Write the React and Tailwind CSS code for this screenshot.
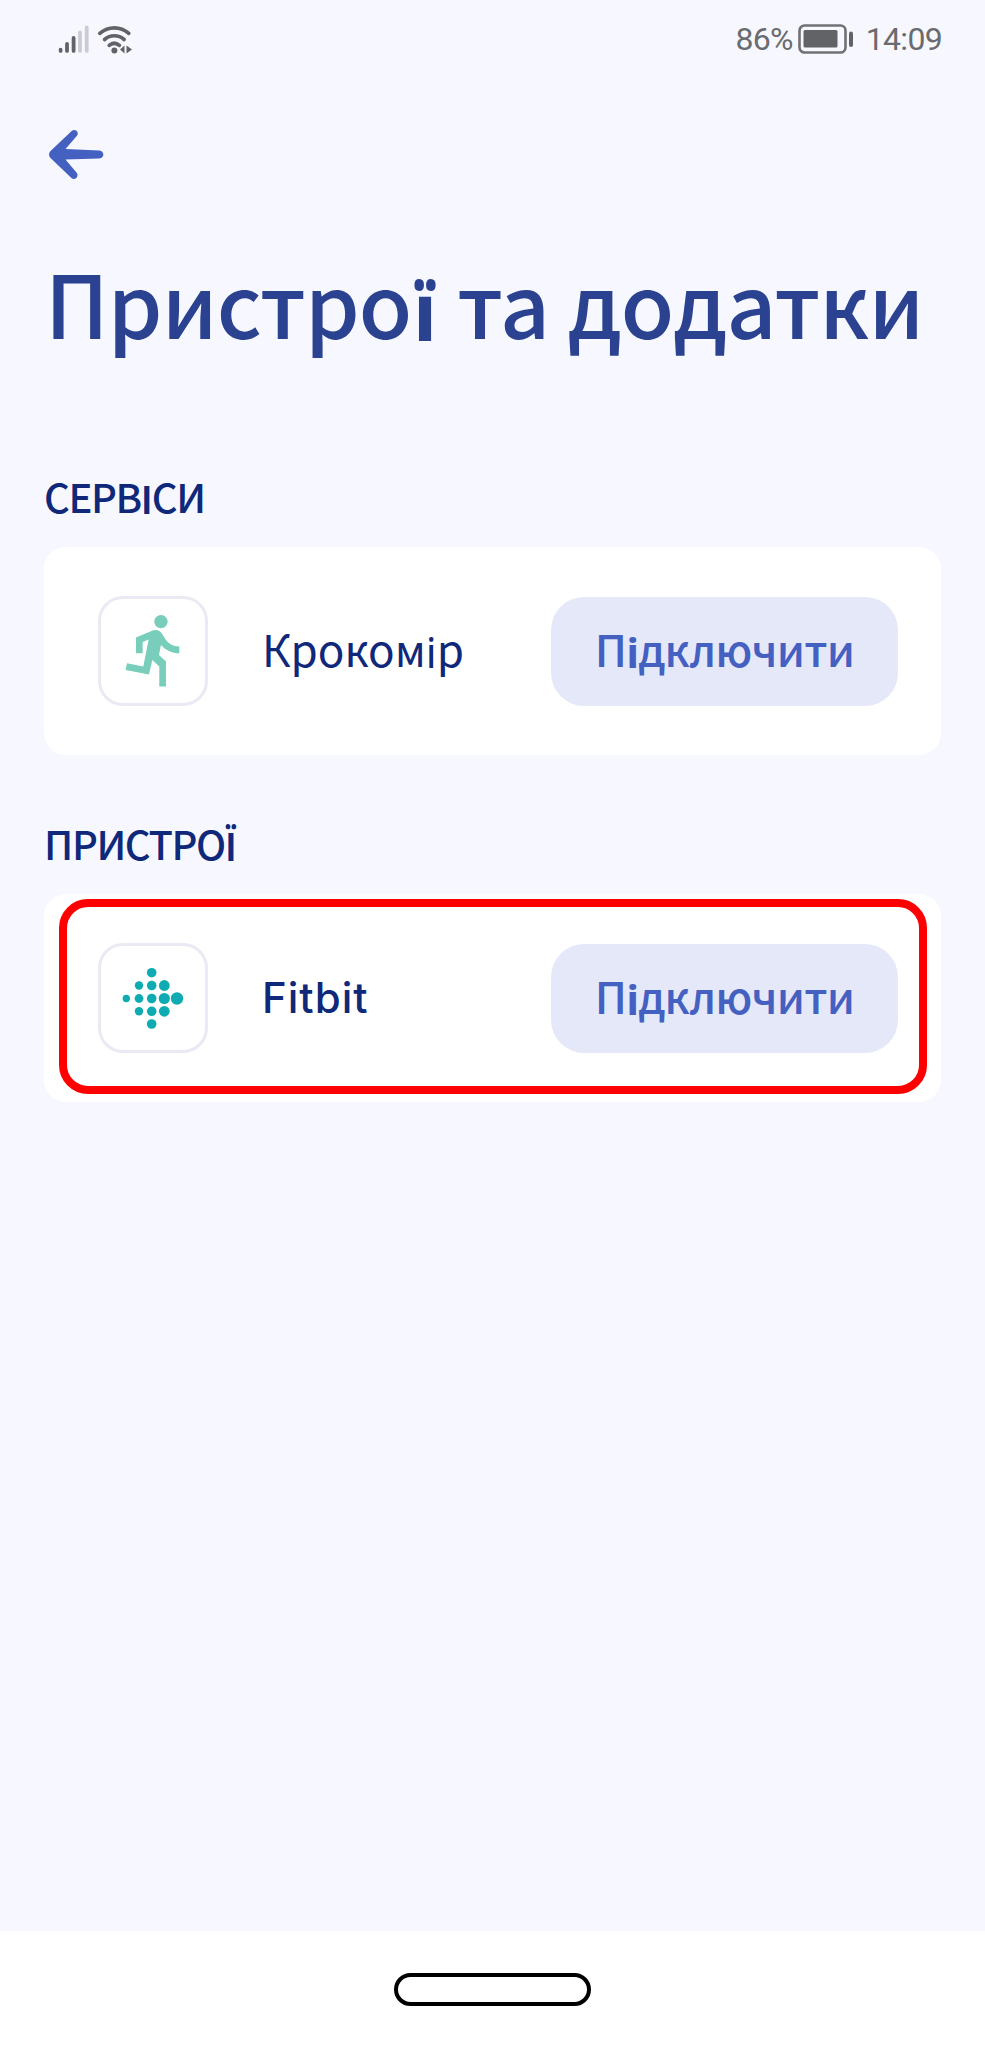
import React from 'react';

const fitbitDots = [
    [14.3, 41.5, 3.7],
    [27, 28.5, 4.2], [27, 41.5, 4.4], [27, 54.3, 4.2],
    [39.7, 15.7, 4.8], [39.7, 28.5, 4.8], [39.7, 41.5, 4.8], [39.7, 54.3, 4.8], [39.7, 67, 4.8],
    [52.3, 28.5, 5.4], [52.3, 41.5, 5.6], [52.3, 54.3, 5.4],
    [65, 41.5, 6.2],
];

const SignalIcon = () => (
    <svg className="w-8 h-7" viewBox="0 0 32 28" fill="none" strokeWidth="3.8" strokeLinecap="round">
        <path d="M2.6 24.7v1.2M9 19v6.9M15.6 13v12.9" stroke="#626366" />
        <path d="M22 7.5v18.4M28.7 2.5v23.4" stroke="#cbccd2" />
    </svg>
);

const WifiIcon = () => (
    <svg className="w-[36px] h-[30px]" viewBox="0 0 36 30" fill="none">
        <g stroke="#626366" strokeWidth="3.7" strokeLinecap="round">
            <path d="M2.8 9.4c8.5-7.4 20.5-7.4 29 0" />
            <path d="M7.6 15.5c5.7-5 13.8-5 19.5 0" />
            <path d="M12.2 21.4c3.2-2.7 7-2.7 10.2 0" />
        </g>
        <circle cx="17.4" cy="26.5" r="3" fill="#626366" />
        <path d="M23 25.5l4.5-4v8zM29.5 21.5v8l5.5-4z" fill="#626366" />
    </svg>
);

const BatteryIcon = () => (
    <svg className="w-[56px] h-[30px]" viewBox="0 0 56 30">
        <rect x="1.5" y="1.5" width="46" height="27" rx="5" fill="none" stroke="#707174" strokeWidth="2.6" />
        <rect x="5.5" y="6" width="34" height="17.5" rx="1.5" fill="#626366" />
        <rect x="51" y="7.5" width="4" height="15.5" rx="2" fill="#626366" />
    </svg>
);

const BackIcon = () => (
    <svg className="w-[57px] h-[50px]" viewBox="0 0 56 50" preserveAspectRatio="none" fill="#4460c0">
        <path d="M1 24.5Q1 22.5 2.5 21L23.2 0.9C25.5 -0.9 28.8 0.2 29.2 3C29.4 4.3 28.8 5.4 28 6.2L17.2 18.9L50.5 20.5C55.7 21 55.7 28.1 50.5 28.4L17.2 29.6L28 42.6C30 45 28.8 48.5 25.8 48.9C24.7 49.1 23.7 48.6 23 48L2.5 28Q1 26.5 1 24.5Z" />
    </svg>
);

const RunIcon = () => (
    <svg className="w-20 h-20 ml-[5px] -mt-[2px] shrink-0" viewBox="0 0 24 24" fill="#78ceba">
        <path d="M13.49 5.48c1.1 0 2-.9 2-2s-.9-2-2-2-2 .9-2 2 .9 2 2 2zm-3.6 13.9l1-4.4 2.1 2v6h2v-7.5l-2.1-2 .6-3c1.3 1.5 3.3 2.5 5.5 2.5v-2c-1.9 0-3.5-1-4.3-2.4l-1-1.6c-.4-.6-1-1-1.7-1-.3 0-.5.1-.8.1l-5.2 2.2v4.7h2v-3.4l1.8-.7-1.6 8.1-4.9-1-.4 2 7 1.4z" />
    </svg>
);

const FitbitIcon = () => (
    <svg className="w-[82px] h-[82px] shrink-0" viewBox="0 0 82 82" fill="#0eacb2">
        {fitbitDots.map(([cx, cy, r]) => (
            <circle key={`${cx}-${cy}`} cx={cx} cy={cy} r={r} />
        ))}
    </svg>
);

// The Ukrainian і and ї are set in a second family, a bit smaller and lower
const UkText = ({ children, glyphClass }) => (
    <>
        {children.split(/([іїІЇ])/).map((part, i) => (
            i % 2 ? (
                <span key={i} className={`relative top-[0.025em] leading-none font-['Noto_Sans',sans-serif] ${glyphClass}`}>{part}</span>
            ) : part
        ))}
    </>
);

const Section = ({ title, className, children }) => (
    <section className={className}>
        <h2 className="h-[75px] text-[40px] leading-[48px] tracking-[-1.4px] font-medium text-[#10287a]">
            <UkText glyphClass="text-[39px] font-semibold tracking-[-1px]">{title}</UkText>
        </h2>
        {children}
    </section>
);

const ConnectRow = ({ icon, name, highlighted }) => (
    <div className="relative flex items-center h-[208px] rounded-[22px] bg-white pl-[54px] pr-[43px]">
        <div className="flex items-center justify-center w-[110px] h-[110px] rounded-[25px] border-3 border-[#e9eaf3]">
            {icon}
        </div>
        <span className="ml-[54px] flex-1 text-[44px] leading-[64px] pb-[6px] text-[#10287a]">{name}</span>
        <button type="button" className="w-[347px] h-[109px] pb-[6px] rounded-[33px] bg-[#e5e8f9] text-[44px] leading-[64px] tracking-[-0.8px] font-medium text-[#4460c0]">
            <UkText glyphClass="text-[42px] font-bold tracking-[-1px]">Підключити</UkText>
        </button>
        {highlighted && (
            <div className="absolute left-[15px] right-[14px] top-[5px] h-[195px] border-8 border-[#ff0000] rounded-[29px]" />
        )}
    </div>
);

const App = () => (
    <div className="flex flex-col w-[985px] h-[2048px] bg-[#f7f8ff] font-['Noto_Sans_CJK_SC','Inter',sans-serif]">
        <header className="flex items-center h-[78px] pl-[58px] pr-[43px] text-[#6a6b6e]">
            <SignalIcon />
            <div className="ml-[7px] flex-1"><WifiIcon /></div>
            <div className="flex items-center font-['Roboto',sans-serif] text-[32px] tracking-[-0.7px]">
                <span>86%</span>
                <span className="ml-[5px]"><BatteryIcon /></span>
                <span className="ml-[12px]">14:09</span>
            </div>
        </header>
        <main className="flex-1 px-11">
            <button type="button" className="block mt-[52px] ml-[4px]"><BackIcon /></button>
            <h1 className="mt-[55px] ml-px h-[132px] text-[87px] leading-[132px] tracking-[-0.9px] font-medium whitespace-nowrap text-[#2b4290]">
                <UkText glyphClass="ml-px text-[80px] font-bold tracking-[2px]">Пристрої та додатки</UkText>
            </h1>
            <Section title="СЕРВІСИ" className="mt-[105px]">
                <ConnectRow icon={<RunIcon />} name={<UkText glyphClass="text-[42px]">Крокомір</UkText>} />
            </Section>
            <Section title="ПРИСТРОЇ" className="mt-[64px]">
                <ConnectRow
                    icon={<FitbitIcon />}
                    name={<span className="relative top-px font-['Inter',sans-serif] font-medium text-[42px] tracking-[1px]">Fitbit</span>}
                    highlighted
                />
            </Section>
        </main>
        <footer className="flex justify-center h-[117px] pt-[42px] bg-white">
            <div className="w-[197px] h-[33px] rounded-full border-4 border-black" />
        </footer>
    </div>
);

export default App;
